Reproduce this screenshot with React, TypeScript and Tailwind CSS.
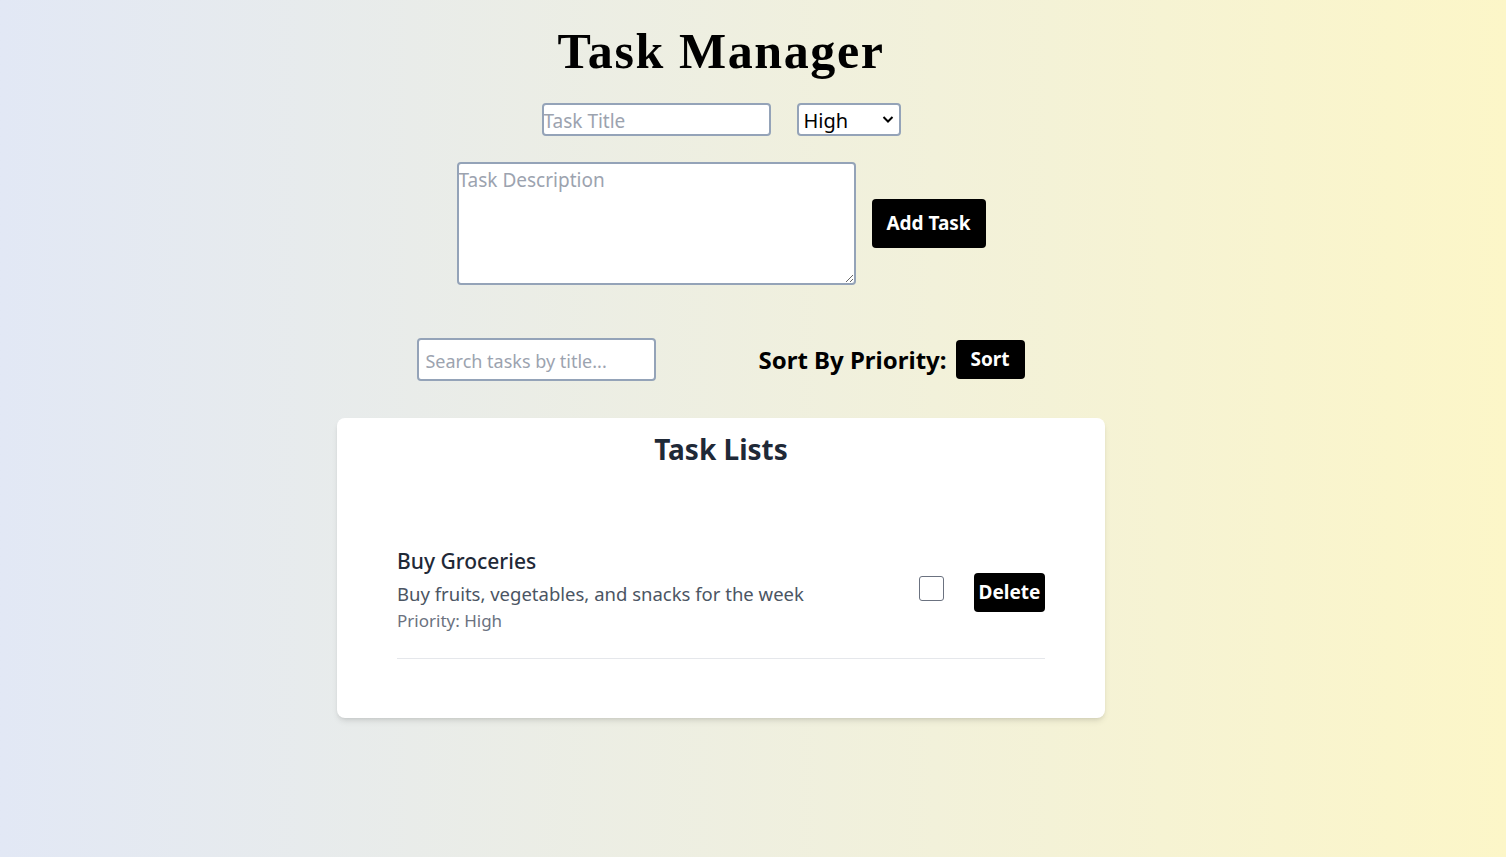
import React from "react";

export default function App() {
  const sans = { fontFamily: '"Noto Sans", "Open Sans", sans-serif' };
  return (
    <div
      className="min-h-[857px] w-full bg-gradient-to-r from-[#e2e8f5] to-[#fcf6c8]"
      style={sans}
    >
      <div className="w-[1442px] flex flex-col items-center pt-[26px]">
        <h1
          className="text-[50px] leading-[50px] font-bold text-black tracking-[1.6px]"
          style={{ fontFamily: '"Liberation Serif", "Times New Roman", serif' }}
        >
          Task Manager
        </h1>
        <div className="mt-[27px] flex items-center gap-[26px]">
          <input
            placeholder="Task Title"
            className="w-[229px] h-[33px] bg-white border-2 border-[#94a3b8] rounded-[4px] px-0 pt-[3px] text-[19px] placeholder:text-[#9ca3af] outline-none"
          />
          <div className="relative w-[104px] h-[33px] bg-white border-2 border-[#94a3b8] rounded-[4px] flex items-center pt-[3px]">
            <span className="pl-[5px] text-[20px] text-black">High</span>
            <svg
              className="absolute right-[5px] top-[10px]"
              width="12"
              height="9"
              viewBox="0 0 12 9"
            >
              <path d="M1.5 2 L6 6.5 L10.5 2" fill="none" stroke="black" strokeWidth="2" />
            </svg>
          </div>
        </div>
        <div className="mt-[26px] flex items-center gap-[16px]">
          <textarea
            placeholder="Task Description"
            className="w-[399px] h-[123px] bg-white border-2 border-[#94a3b8] rounded-[4px] px-0 pt-[2px] text-[19px] placeholder:text-[#9ca3af] outline-none"
          />
          <button className="w-[114px] h-[49px] bg-black text-white rounded-[4px] text-[19px] font-bold">
            Add Task
          </button>
        </div>
        <div className="mt-[53px] flex items-center">
          <input
            placeholder="Search tasks by title..."
            className="w-[239px] h-[43px] bg-white border-2 border-[#94a3b8] rounded-[4px] px-[6px] pt-[2px] text-[18px] placeholder:text-[#9ca3af] outline-none"
          />
          <span className="ml-[102px] text-[24px] font-bold text-black">Sort By Priority:</span>
          <button className="ml-[9px] w-[69px] h-[39px] bg-black text-white rounded-[4px] text-[19px] font-bold">
            Sort
          </button>
        </div>
        <div className="mt-[37px] w-[768px] bg-white rounded-lg shadow-md pt-[13px] pb-[59px] px-[60px]">
          <h2 className="text-center text-[28px] leading-[36px] font-bold text-[#1f2937]">
            Task Lists
          </h2>
          <div className="mt-[80px] border-b border-[#e5e7eb] pb-[25px] flex items-center">
            <div className="flex-1">
              <div className="text-[21px] leading-[28px] font-medium text-[#1f2937]">
                Buy Groceries
              </div>
              <div className="mt-[5px] text-[18.5px] leading-[28px] text-[#4b5563]">
                Buy fruits, vegetables, and snacks for the week
              </div>
              <div className="mt-[1px] text-[17px] leading-[24px] text-[#6b7280]">Priority: High</div>
            </div>
            <div className="w-[25px] h-[25px] border border-[#6b7280] rounded-[3px] bg-white -mt-[4px]" />
            <button className="ml-[30px] mt-[4px] w-[71px] h-[39px] bg-black text-white rounded-[4px] text-[19px] font-bold">
              Delete
            </button>
          </div>
        </div>
      </div>
    </div>
  );
}
